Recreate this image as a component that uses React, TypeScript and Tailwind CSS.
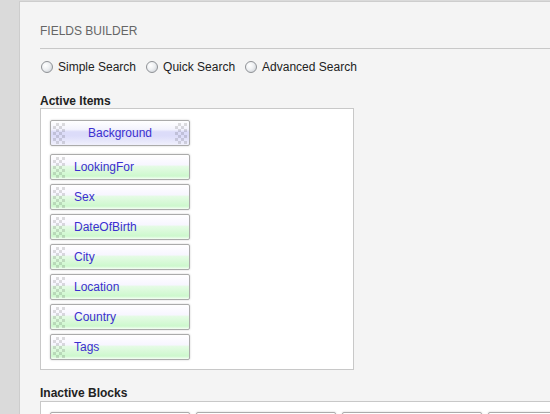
import React from "react";

const checker =
  "bg-[conic-gradient(rgba(0,0,0,0.13)_25%,transparent_0_50%,rgba(0,0,0,0.13)_0_75%,transparent_0)] bg-[length:6px_6px]";

function Handle() {
  return <span className={`w-[12px] h-[21px] shrink-0 ${checker}`} />;
}

function Item({ label }: { label: string }) {
  return (
    <div className="w-[140px] h-[26px] rounded-[2px] border border-[#ababab] shadow-[0_0_2px_rgba(0,0,0,0.22)] bg-[linear-gradient(to_bottom,#ffffff_0%,#f7f5ff_42%,#e6fbe6_46%,#cdf8cd_88%,#f4fff4_100%)] flex items-center pl-[2px]">
      <Handle />
      <span className="ml-[9px] text-[12px] leading-[14px] text-[#3b2fcf]">{label}</span>
    </div>
  );
}

function BgItem() {
  return (
    <div className="w-[140px] h-[26px] rounded-[2px] border border-[#ababab] shadow-[0_0_2px_rgba(0,0,0,0.22)] bg-[linear-gradient(to_bottom,#ffffff_0%,#f3f3fd_35%,#dcdcf9_45%,#dcdcf9_62%,#f0f0fd_100%)] flex items-center justify-between px-[2px]">
      <Handle />
      <span className="text-[12px] leading-[14px] text-[#3b2fcf]">Background</span>
      <Handle />
    </div>
  );
}

function Radio({ label, first }: { label: string; first?: boolean }) {
  return (
    <div className={`flex items-center ${first ? "ml-[1px]" : "ml-[10px]"}`}>
      <span className="w-[12px] h-[12px] rounded-full border border-[#8f9296] bg-[radial-gradient(circle_at_35%_35%,#ffffff_0%,#eef0f2_45%,#c4c9d0_100%)]" />
      <span className="ml-[5px] text-[12px] leading-[14px] text-[#222]">{label}</span>
    </div>
  );
}

export default function App() {
  const items = ["LookingFor", "Sex", "DateOfBirth", "City", "Location", "Country", "Tags"];
  return (
    <div
      className="w-[550px] h-[414px] overflow-hidden bg-[#dadada] pl-[19px] pt-[1px]"
      style={{ fontFamily: '"Liberation Sans", Arial, sans-serif' }}
    >
      <div className="h-full border-l border-t border-[#cdcdcd] bg-[#f4f4f4] pl-[20px] pt-[22px]">
        <div className="text-[12px] leading-[14px] text-[#666]">FIELDS BUILDER</div>
        <div className="mt-[10px] border-b border-[#c8c8c8]" />
        <div className="mt-[11px] flex items-center h-[14px]">
          <Radio label="Simple Search" first />
          <Radio label="Quick Search" />
          <Radio label="Advanced Search" />
        </div>
        <div className="mt-[20px] text-[12px] leading-[14px] font-bold text-[#222]">Active Items</div>
        <div className="w-[314px] h-[262px] bg-white border border-[#c8c8c8] pl-[9px] pt-[11px] flex flex-col gap-[4px]">
          <div className="mb-[4px]">
            <BgItem />
          </div>
          {items.map((l) => (
            <Item key={l} label={l} />
          ))}
        </div>
        <div className="mt-[16px] text-[12px] leading-[14px] font-bold text-[#222]">Inactive Blocks</div>
        <div className="mt-[1px] w-[620px] h-[80px] bg-white border border-[#c8c8c8] pl-[9px] pt-[10px] flex gap-[6px]">
          {[0, 1, 2, 3].map((i) => (
            <div
              key={i}
              className="w-[140px] h-[26px] rounded-[2px] border border-[#ababab] shadow-[0_0_2px_rgba(0,0,0,0.22)] bg-white"
            />
          ))}
        </div>
      </div>
    </div>
  );
}
